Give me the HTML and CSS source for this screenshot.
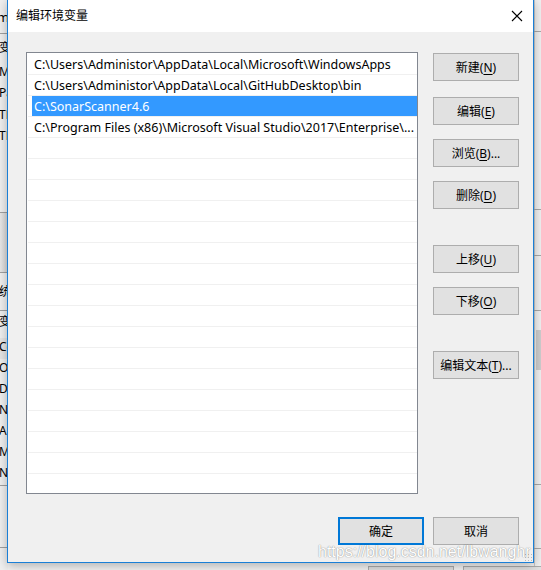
FILE: index.html
```html
<!DOCTYPE html>
<html lang="zh-CN">
<head>
<meta charset="utf-8">
<title>编辑环境变量</title>
<link rel="stylesheet" href="styles.css">
</head>
<body>
<div class="desk">
  <div class="back-left">
    <div class="bl-title">m</div>
    <div class="bl-line" style="top:33px"></div>
    <div class="bl-txt" style="top:40px">变</div>
    <div class="bl-txt" style="top:64px">M</div>
    <div class="bl-txt" style="top:85px">Pa</div>
    <div class="bl-txt" style="top:107px">TE</div>
    <div class="bl-txt" style="top:128px">TM</div>
    <div class="bl-band" style="top:212px;height:61px"></div>
    <div class="bl-txt" style="top:284px">统</div>
    <div class="bl-line" style="top:310px"></div>
    <div class="bl-txt" style="top:314px">变</div>
    <div class="bl-sel" style="top:338px"></div>
    <div class="bl-txt" style="top:339px">Co</div>
    <div class="bl-txt" style="top:360px">Ol</div>
    <div class="bl-txt" style="top:381px">Di</div>
    <div class="bl-txt" style="top:402px">N</div>
    <div class="bl-txt" style="top:423px">A</div>
    <div class="bl-txt" style="top:444px">M</div>
    <div class="bl-txt" style="top:465px">N</div>
    <div class="bl-line" style="top:485px"></div>
    <div class="bl-line" style="top:547px"></div>
  </div>
  <div class="back-right">
    <div class="br-vline"></div>
    <div class="br-line" style="top:31px"></div>
    <div class="br-line" style="top:209px"></div>
    <div class="br-line" style="top:255px"></div>
    <div class="br-line" style="top:310px"></div>
    <div class="br-thumb"></div>
    <div class="br-line" style="top:484px"></div>
    <div class="br-line" style="top:548px"></div>
  </div>
  <div class="back-btn" style="left:368px"></div>
  <div class="back-btn" style="left:463px"></div>

  <div class="dialog">
    <div class="titlebar">
      <span class="title">编辑环境变量</span>
      <svg class="close" width="12" height="12" viewBox="0 0 12 12"><path d="M1 1 L11 11 M11 1 L1 11" stroke="#000" stroke-width="1.1" fill="none"/></svg>
    </div>
    <div class="content">
      <div class="main">
        <div class="list">
          <div class="row"><span class="cell">C:\Users\Administor\AppData\Local\Microsoft\WindowsApps</span></div>
          <div class="row"><span class="cell">C:\Users\Administor\AppData\Local\GitHubDesktop\bin</span></div>
          <div class="row selected"><span class="cell">C:\SonarScanner4.6</span></div>
          <div class="row"><span class="cell">C:\Program Files (x86)\Microsoft Visual Studio\2017\Enterprise\...</span></div>
          <div class="row"></div><div class="row"></div><div class="row"></div><div class="row"></div>
          <div class="row"></div><div class="row"></div><div class="row"></div><div class="row"></div>
          <div class="row"></div><div class="row"></div><div class="row"></div><div class="row"></div>
          <div class="row"></div><div class="row"></div><div class="row"></div><div class="row"></div>
          <div class="row"></div>
        </div>
        <div class="side">
          <button class="btn b-new">新建(<u>N</u>)</button>
          <button class="btn b-edit">编辑(<u>E</u>)</button>
          <button class="btn b-browse">浏览(<u>B</u>)...</button>
          <button class="btn b-del">删除(<u>D</u>)</button>
          <button class="btn b-up">上移(<u>U</u>)</button>
          <button class="btn b-down">下移(<u>O</u>)</button>
          <button class="btn b-text">编辑文本(<u>T</u>)...</button>
        </div>
      </div>
      <div class="footer">
        <button class="btn default">确定</button>
        <button class="btn">取消</button>
      </div>
    </div>
    <div class="grip"></div>
  </div>
  <div class="watermark">https://blog.csdn.net/lbwanghr</div>
</div>
</body>
</html>
```

FILE: styles.css
```css
* { box-sizing: border-box; }
html, body { margin: 0; padding: 0; }
body {
  width: 541px;
  height: 570px;
  overflow: hidden;
  background: #f4f4f4;
  font-family: "Noto Sans", "Noto Sans CJK SC", sans-serif;
  font-size: 12px;
  color: #000;
}
.desk { position: relative; width: 541px; height: 570px; overflow: hidden; }

/* background windows */
.back-left { position: absolute; left: 0; top: 0; width: 8px; height: 570px; background: #f0f0f0; overflow: hidden; }
.bl-title { position: absolute; left: -3px; top: 9px; font-size: 13px; line-height: 16px; color: #000; }
.bl-line { position: absolute; left: 0; width: 8px; height: 1px; background: #a0a0a0; }
.bl-txt { position: absolute; left: -1px; font-size: 12px; line-height: 16px; color: #000; white-space: nowrap; }
.bl-band { position: absolute; left: 0; width: 8px; background: linear-gradient(90deg, #e8e8e8, #d6d6d6); border-top: 1px solid #a0a0a0; border-bottom: 1px solid #a0a0a0; }
.bl-sel { position: absolute; left: 0; width: 8px; height: 21px; background: #e5e5e5; }

.back-right { position: absolute; right: 0; top: 0; width: 8px; height: 570px; background: #f0f0f0; }
.br-vline { position: absolute; left: 1px; top: 0; width: 1px; height: 570px; background: #c8c8c8; }
.br-line { position: absolute; left: 0; width: 8px; height: 1px; background: #a8a8a8; }
.br-thumb { position: absolute; left: 3px; top: 330px; width: 5px; height: 40px; background: #cdcdcd; }

.back-btn { position: absolute; top: 566px; width: 86px; height: 20px; border: 1px solid #adadad; background: #e1e1e1; }

/* dialog */
.dialog {
  position: absolute;
  left: 7px;
  top: -1px;
  width: 527px;
  height: 564px;
  border: 1px solid #1a7fd6;
  background: #f0f0f0;
  box-shadow: 0 3px 10px rgba(0, 0, 0, 0.28);
  display: flex;
  flex-direction: column;
}
.titlebar {
  height: 32px;
  flex: none;
  background: #fff;
  display: flex;
  align-items: center;
  justify-content: space-between;
  padding: 0 10px 0 8px;
}
.title { font-size: 12px; line-height: 16px; }
.close { display: block; }

.content {
  flex: 1;
  padding: 20px 14px 0 18px;
  display: flex;
  flex-direction: column;
}
.main { display: flex; gap: 15px; align-items: flex-start; }
.list {
  width: 392px;
  height: 442px;
  background: #fff;
  border: 1px solid #828790;
  overflow: hidden;
  padding: 1px 0 0 1px;
}
.row {
  height: 21px;
  border-bottom: 1px solid #f0f0f0;
  padding-left: 4px;
  display: flex;
}
.cell {
  display: block;
  flex: 1;
  padding-left: 2px;
  font-size: 12.5px;
  line-height: 21px;
  white-space: nowrap;
  overflow: hidden;
}
.row.selected .cell { background: #3399ff; color: #fff; }

.side { display: flex; flex-direction: column; width: 86px; }
.btn {
  display: block;
  width: 86px;
  height: 28px;
  border: 1px solid #adadad;
  background: #e1e1e1;
  font-family: "Noto Sans", "Noto Sans CJK SC", sans-serif;
  font-size: 12px;
  color: #000;
  padding: 0;
  text-align: center;
}
.btn u { text-decoration: underline; text-underline-offset: 2px; }
.b-new { margin-top: 1px; }
.b-edit { margin-top: 16px; }
.b-browse { margin-top: 14px; }
.b-del { margin-top: 14px; }
.b-up { margin-top: 36px; }
.b-down { margin-top: 14px; }
.b-text { margin-top: 36px; }

.footer { display: flex; justify-content: flex-end; gap: 9px; margin-top: 23px; }
.btn.default { border: 2px solid #0078d7; }

.grip {
  position: absolute;
  right: 1px;
  bottom: 1px;
  width: 8px;
  height: 8px;
  background-image: radial-gradient(circle, #b8b8b8 0.8px, transparent 1px);
  background-size: 3px 3px;
}
.watermark {
  position: absolute;
  left: 318px;
  top: 542px;
  font-family: "Liberation Sans", Arial, sans-serif;
  font-size: 16px;
  line-height: 20px;
  color: #fff;
  text-shadow: 0 0 1px rgba(0, 0, 0, 0.45), 0 0 2px rgba(0, 0, 0, 0.15);
  white-space: nowrap;
}
```
